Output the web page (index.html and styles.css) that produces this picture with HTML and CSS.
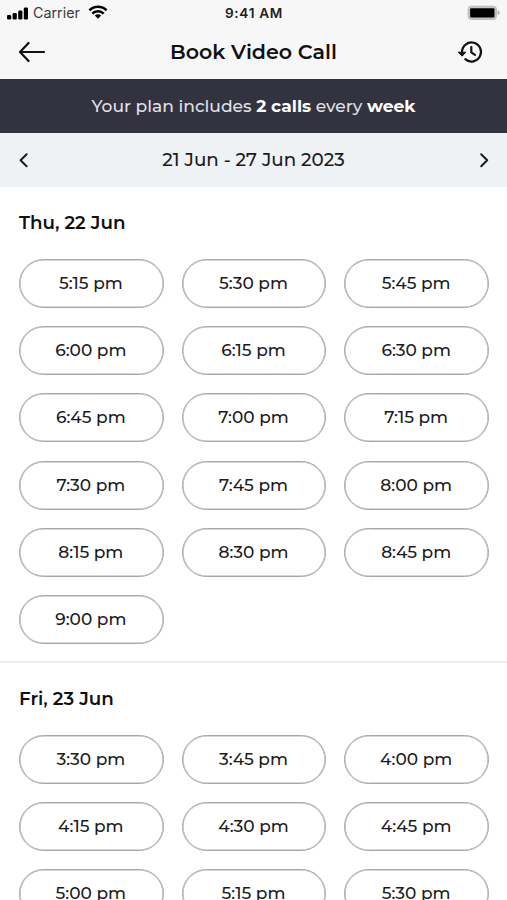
FILE: index.html
```
<!DOCTYPE html>
<html lang="en">

<head>
    <meta charset="utf-8">
    <meta name="viewport" content="width=device-width, initial-scale=1">
    <title>Book Video Call</title>
    <link rel="stylesheet" href="styles.css">
</head>

<body>
    <div class="status">
        <div class="carrier">
            <svg class="signal" width="21" height="13" viewBox="0 0 21 13">
                <rect x="0" y="8" width="4.2" height="4.5" rx="1.3" />
                <rect x="5.6" y="6" width="4.2" height="6.5" rx="1.3" />
                <rect x="11.2" y="3.5" width="4.2" height="9" rx="1.3" />
                <rect x="16.8" y="0.5" width="4.2" height="12" rx="1.3" />
            </svg>
            <span class="carrier-name">Carrier</span>
            <svg class="wifi" width="20" height="14" viewBox="0 0 20 14" fill="none" stroke="#000" stroke-width="2.6">
                <path d="M1.4 5.3a12.2 12.2 0 0 1 17.2 0" />
                <path d="M4.3 8.7a8 8 0 0 1 11.4 0" />
                <path d="M10 13.8l-3.2-3.3a4.6 4.6 0 0 1 6.4 0z" fill="#000" stroke="none" />
            </svg>
        </div>
        <div class="clock">9:41 AM</div>
        <svg class="battery" width="34" height="16" viewBox="0 0 34 16">
            <rect x="1.1" y="1.2" width="28.4" height="13.2" rx="3.2" fill="#c4c4c4" stroke="#bcbcbc" />
            <rect x="3.1" y="3.3" width="24.4" height="9.2" rx="1" fill="#000" />
            <path d="M30.7 5.3c2.6 1 2.6 4 0 5z" fill="#b0b0b0" />
        </svg>
    </div>

    <div class="header">
        <svg class="back" width="28" height="22" viewBox="0 0 28 22">
            <path d="M26 11H2M10.6 2L2 11l8.6 9" />
        </svg>
        <h1>Book Video Call</h1>
        <svg class="history" width="26" height="24" viewBox="0 0 26 24">
            <path d="M4 13.2V12a9.5 9.5 0 1 1 3.3 7.2" />
            <path d="M13.3 7v5.4l3.7 2.4" />
            <path class="tip" d="M0.6 12.2h7.2l-3.4 3.7z" />
        </svg>
    </div>

    <div class="plan"><span>Your plan includes <b>2 calls</b> every <b>week</b></span></div>

    <div class="week">
        <svg class="chevron" width="10" height="16" viewBox="0 0 10 16">
            <path d="M8.6 2.2L2.6 8.2l6 6" />
        </svg>
        <span>21 Jun - 27 Jun 2023</span>
        <svg class="chevron" width="10" height="16" viewBox="0 0 10 16">
            <path d="M2.2 2.2l6 6-6 6" />
        </svg>
    </div>

    <div class="day">
        <h2>Thu, 22 Jun</h2>
        <div class="slots">
            <div class="slot">5:15 pm</div>
            <div class="slot">5:30 pm</div>
            <div class="slot">5:45 pm</div>
            <div class="slot">6:00 pm</div>
            <div class="slot">6:15 pm</div>
            <div class="slot">6:30 pm</div>
            <div class="slot">6:45 pm</div>
            <div class="slot">7:00 pm</div>
            <div class="slot">7:15 pm</div>
            <div class="slot">7:30 pm</div>
            <div class="slot">7:45 pm</div>
            <div class="slot">8:00 pm</div>
            <div class="slot">8:15 pm</div>
            <div class="slot">8:30 pm</div>
            <div class="slot">8:45 pm</div>
            <div class="slot">9:00 pm</div>
        </div>
    </div>

    <div class="day">
        <h2>Fri, 23 Jun</h2>
        <div class="slots">
            <div class="slot">3:30 pm</div>
            <div class="slot">3:45 pm</div>
            <div class="slot">4:00 pm</div>
            <div class="slot">4:15 pm</div>
            <div class="slot">4:30 pm</div>
            <div class="slot">4:45 pm</div>
            <div class="slot">5:00 pm</div>
            <div class="slot">5:15 pm</div>
            <div class="slot">5:30 pm</div>
        </div>
    </div>
</body>

</html>
```
FILE: styles.css
```
* {
    box-sizing: border-box;
}

body {
    margin: 0;
    height: 900px;
    overflow: hidden;
    background-color: #fff;
    color: #1b1b1d;
    font-family: Montserrat, Inter, sans-serif;
}

.status {
    display: grid;
    grid-template-columns: 1fr auto 1fr;
    align-items: center;
    height: 26px;
    padding: 0 6px 0 7px;
    background-color: #f7f7f7;
    font-family: Inter, sans-serif;
}

.carrier {
    display: flex;
    align-items: center;
}

.carrier-name {
    margin: 0 8px 2px 5px;
    font-size: 14.3px;
    color: #3c3c3c;
}

.carrier .wifi {
    margin-bottom: 2px;
}

.clock {
    font-size: 13.6px;
    font-weight: 600;
    letter-spacing: 0.7px;
    color: #222;
}

.battery {
    justify-self: end;
}

.header {
    display: flex;
    align-items: center;
    justify-content: space-between;
    height: 53px;
    padding: 0 23px 2px 18px;
    background-color: #f7f7f7;
}

.header svg {
    fill: none;
    stroke: #111;
    stroke-width: 2.2;
    stroke-linecap: round;
    stroke-linejoin: round;
}

.header .tip {
    fill: #111;
    stroke-width: 1;
}

h1 {
    margin: 0 0 0 3px;
    font-size: 20.6px;
    font-weight: 600;
    color: #111;
}

.plan {
    display: flex;
    align-items: center;
    justify-content: center;
    height: 54px;
    padding-bottom: 2px;
    background-color: #32333f;
    color: #e0e0ea;
    font-size: 17.1px;
    font-weight: 500;
}

.plan b {
    color: #fff;
    font-weight: 700;
}

.week {
    display: flex;
    align-items: center;
    justify-content: space-between;
    height: 54px;
    padding: 0 18px 1px;
    background-color: #eef2f5;
    font-size: 18.3px;
    font-weight: 500;
}

.chevron {
    fill: none;
    stroke: #1b1b1d;
    stroke-width: 2;
    stroke-linecap: round;
    stroke-linejoin: round;
}

.day {
    padding: 24px 18px 17px 19px;
    border-bottom: 2px solid #ededef;
}

h2 {
    margin: 0 0 24px;
    font-size: 18.3px;
    line-height: 24px;
    font-weight: 600;
    color: #111;
}

.slots {
    display: grid;
    grid-template-columns: repeat(3, 1fr);
    gap: 18.2px 18px;
}

.slot {
    display: flex;
    align-items: center;
    justify-content: center;
    height: 49px;
    padding: 0 1px 1px 0;
    border: 1px solid #a6a6ab;
    border-radius: 25px;
    box-shadow: inset 0 0 0 0.6px #b4b4b8;
    font-size: 17px;
    font-weight: 500;
}
```
